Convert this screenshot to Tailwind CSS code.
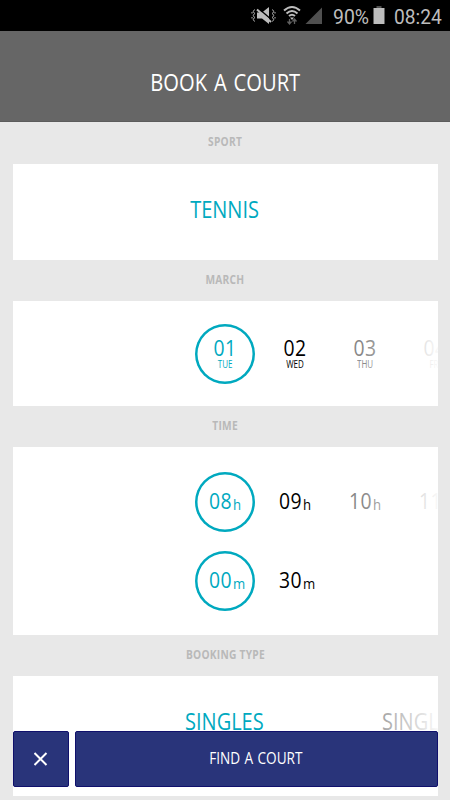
<!DOCTYPE html>
<html lang="en">
<head>
    <meta charset="UTF-8">
    <meta name="viewport" content="width=device-width, initial-scale=1.0">
    <script src="https://cdn.jsdelivr.net/npm/@tailwindcss/browser@4"></script>
    <title>Book a Court</title>
    <style>
        * {
            font-family: 'Open Sans', 'Noto Sans', sans-serif;
        }
    </style>
</head>
<body class="relative h-[800px] w-[450px] overflow-hidden bg-[#e8e8e8] whitespace-nowrap">
    <!-- Status bar -->
    <div class="flex h-[30.500px] items-center bg-black pl-[250px] text-[#bdbdbd]">
        <svg class="h-[30px] w-[125px] shrink-0" viewBox="0 0 125 30" fill="none">
            <path d="M7 12.500h5l7-5.500v17l-7-5.500H7z" fill="#bdbdbd"/>
            <path d="M8.500 8.500l14 12" stroke="#000" stroke-width="1.500"/>
            <path d="M7 9.500l14 12.500" stroke="#bdbdbd" stroke-width="2"/>
            <path d="M4.500 9.500l-1.200 2 1.200 2-1.200 2 1.200 2-1.200 2 1.200 2M2 12v1.500M2 17v1.500M22.500 9.500l1.200 2-1.200 2 1.200 2-1.200 2 1.200 2-1.200 2M25 12v1.500M25 17v1.500" stroke="#bdbdbd"/>
            <path d="M34 10.500q8-7 16 0M36.500 13.500q5.500-5 11 0M39 16q3-2.500 6 0" stroke="#bdbdbd" stroke-width="2"/>
            <path d="M40 17.500h4L42 20z" fill="#bdbdbd"/>
            <path d="M39.500 24v-5m-2 2.500l2 2.500 2-2.500M44.500 24v-5m-2 2.500l2-2.500 2 2.500" stroke="#606060" stroke-width="1.300"/>
            <path d="M72 7.500V24H55.500z" fill="#505050"/>
        </svg>
        <div class="absolute left-[333px] top-[2px] origin-left scale-x-[0.97] text-[20px] leading-[30px]" style="font-family: Roboto">90%</div>
        <svg class="absolute left-[373px] top-0 h-[30px] w-[12px]" viewBox="0 0 12 30">
            <path d="M3.500 6h5v2.500h-5z" fill="#505050"/>
            <path d="M.500 8h11v16H.500z" fill="#bdbdbd"/>
        </svg>
        <div class="absolute left-[394px] top-[2px] origin-left scale-x-[0.96] text-[20px] leading-[30px]" style="font-family: Roboto">08:24</div>
    </div>

    <!-- Header -->
    <header class="flex h-[91.500px] items-center justify-center border-b border-[#5c5c5c] bg-[#666] pt-[13px]">
        <h1 class="scale-x-[0.84] text-[24px] [word-spacing:2px] text-white">BOOK A COURT</h1>
    </header>

    <main class="px-[12.500px]">
        <!-- Sport -->
        <h2 class="flex h-[41.500px] items-center justify-center pb-px text-[12px] font-bold text-[#b9b9b9]"><span class="scale-x-[0.85] tracking-[0.3px]">SPORT</span></h2>
        <section class="flex h-[96.500px] items-center justify-center bg-white pb-[6px]">
            <span class="scale-x-[0.87] text-[23px] text-[#00a9bf]">TENNIS</span>
        </section>

        <!-- Date -->
        <h2 class="flex h-[41px] items-center justify-center pb-px text-[12px] font-bold text-[#b9b9b9]"><span class="scale-x-[0.85] tracking-[0.3px]">MARCH</span></h2>
        <section class="relative flex h-[105px] items-center gap-[10px] overflow-hidden bg-white pl-[182.500px]">
            <div class="flex size-[60px] shrink-0 flex-col items-center justify-center rounded-full pb-[2px] text-[#00a9bf] inset-ring-[2.500px] inset-ring-[#00a9bf]">
                <span class="scale-x-[0.88] text-[22px] leading-[22px] tracking-[0.5px]">01</span>
                <span class="scale-x-[0.8] text-[10px] leading-[12px]">TUE</span>
            </div>
            <div class="flex size-[60px] shrink-0 flex-col items-center justify-center pb-[2px] text-black">
                <span class="scale-x-[0.88] text-[22px] leading-[22px] tracking-[0.5px]">02</span>
                <span class="scale-x-[0.8] text-[10px] leading-[12px]">WED</span>
            </div>
            <div class="flex size-[60px] shrink-0 flex-col items-center justify-center pb-[2px] text-[#888]">
                <span class="scale-x-[0.88] text-[22px] leading-[22px] tracking-[0.5px]">03</span>
                <span class="scale-x-[0.8] text-[10px] leading-[12px]">THU</span>
            </div>
            <div class="flex size-[60px] shrink-0 flex-col items-center justify-center pb-[2px] text-[#888]">
                <span class="scale-x-[0.88] text-[22px] leading-[22px] tracking-[0.5px]">04</span>
                <span class="scale-x-[0.8] text-[10px] leading-[12px]">FRI</span>
            </div>
            <div class="absolute inset-y-0 right-0 w-[76px] bg-linear-to-r from-white/0 to-white/95"></div>
        </section>

        <!-- Time -->
        <h2 class="flex h-[41px] items-center justify-center pb-px text-[12px] font-bold text-[#b9b9b9]"><span class="scale-x-[0.85] tracking-[0.3px]">TIME</span></h2>
        <section class="relative flex h-[188px] flex-col gap-[19px] overflow-hidden bg-white pt-[25px] pl-[182.500px]">
            <div class="flex gap-[10px]">
                <div class="flex size-[60px] shrink-0 items-center rounded-full pb-[4px] pl-[13.500px] text-[#00a9bf] inset-ring-[2.500px] inset-ring-[#00a9bf]">
                    <span class="origin-left scale-x-[0.88] text-[22px] tracking-[0.5px]">08<span class="relative top-[1.500px] ml-[1px] text-[15px]">h</span></span>
                </div>
                <div class="flex size-[60px] shrink-0 items-center pb-[4px] pl-[13.500px] text-black">
                    <span class="origin-left scale-x-[0.88] text-[22px] tracking-[0.5px]">09<span class="relative top-[1.500px] ml-[1px] text-[15px]">h</span></span>
                </div>
                <div class="flex size-[60px] shrink-0 items-center pb-[4px] pl-[13.500px] text-[#888]">
                    <span class="origin-left scale-x-[0.88] text-[22px] tracking-[0.5px]">10<span class="relative top-[1.500px] ml-[1px] text-[15px]">h</span></span>
                </div>
                <div class="flex size-[60px] shrink-0 items-center pb-[4px] pl-[13.500px] text-[#888]">
                    <span class="origin-left scale-x-[0.88] text-[22px] tracking-[0.5px]">11<span class="relative top-[1.500px] ml-[1px] text-[15px]">h</span></span>
                </div>
            </div>
            <div class="flex gap-[10px]">
                <div class="flex size-[60px] shrink-0 items-center rounded-full pb-[4px] pl-[13.500px] text-[#00a9bf] inset-ring-[2.500px] inset-ring-[#00a9bf]">
                    <span class="origin-left scale-x-[0.88] text-[22px] tracking-[0.5px]">00<span class="relative top-[1.500px] ml-[1px] text-[15px]">m</span></span>
                </div>
                <div class="flex size-[60px] shrink-0 items-center pb-[4px] pl-[13.500px] text-black">
                    <span class="origin-left scale-x-[0.88] text-[22px] tracking-[0.5px]">30<span class="relative top-[1.500px] ml-[1px] text-[15px]">m</span></span>
                </div>
            </div>
            <div class="absolute inset-y-0 right-0 w-[76px] bg-linear-to-r from-white/0 to-white/95"></div>
        </section>

        <!-- Booking type -->
        <h2 class="flex h-[41px] items-center justify-center pb-px text-[12px] font-bold text-[#b9b9b9]"><span class="scale-x-[0.85] tracking-[0.3px]">BOOKING TYPE</span></h2>
        <section class="relative flex h-[120px] overflow-hidden bg-white pt-[28px] pl-[172.500px]">
            <span class="w-[197px] shrink-0 origin-left scale-x-[0.87] text-[23px] text-[#00a9bf]">SINGLES</span>
            <span class="shrink-0 origin-left scale-x-[0.87] text-[23px] text-[#888]">SINGLES</span>
            <div class="absolute inset-y-0 right-0 w-[76px] bg-linear-to-r from-white/0 to-white/95"></div>
        </section>
    </main>

    <!-- Bottom actions -->
    <div class="absolute inset-x-[12.500px] top-[731px] flex h-[56px] gap-[6px] text-white">
        <button class="flex w-[56.500px] shrink-0 items-center justify-center rounded-[2px] border border-[#10106c] bg-[#29347a]">
            <svg class="size-[14px]" viewBox="0 0 14 14" fill="none" stroke="#fff" stroke-width="2">
                <path d="M.500 1l12 12M12.500 1L.500 13"/>
            </svg>
        </button>
        <button class="flex flex-1 items-center justify-center rounded-[2px] border border-[#10106c] bg-[#29347a] pb-[2px]">
            <span class="scale-x-[0.85] text-[16px] [word-spacing:1px]">FIND A COURT</span>
        </button>
    </div>
</body>
</html>
